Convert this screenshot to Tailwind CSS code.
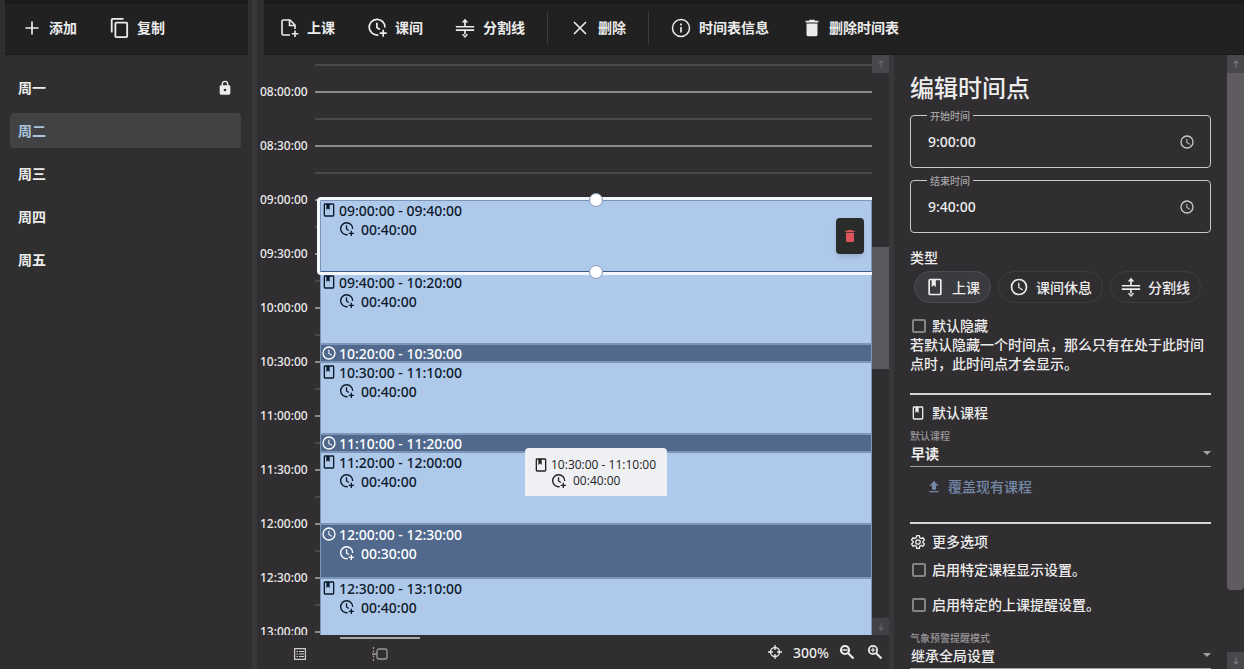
<!DOCTYPE html>
<html lang="zh-CN">
<head>
<meta charset="utf-8">
<meta name="viewport" content="width=device-width, initial-scale=1">
<title>时间表</title>
<script src="https://cdn.jsdelivr.net/npm/@tailwindcss/browser@4"></script>
</head>
<body class="bg-[#312e31] text-[#ececec] font-['Noto_Sans','Noto_Sans_CJK_SC',sans-serif] text-sm font-medium leading-[19px]">
<svg class="hidden" aria-hidden="true">
  <symbol id="book" viewBox="0 0 24 24"><path fill="currentColor" d="M18 2a2 2 0 0 1 2 2v16a2 2 0 0 1-2 2H6a2 2 0 0 1-2-2V4a2 2 0 0 1 2-2h12m0 2h-5v8l-2.500-2.250L8 12V4H6v16h12V4Z"/></symbol>
  <symbol id="clock" viewBox="0 0 24 24"><path fill="currentColor" d="M12 20a8 8 0 1 0 0-16 8 8 0 0 0 0 16m0-18a10 10 0 1 1 0 20 10 10 0 0 1 0-20m.5 5v5.250l4.500 2.670-.75 1.230L11 13V7h1.500Z"/></symbol>
  <symbol id="clock-plus" viewBox="0 0 24 24"><g fill="none" stroke="currentColor" stroke-width="2"><path d="M20.500 12A9 9 0 1 0 13 20.500M11.300 6.500v5.500l3.500 2.200M18.500 14.500v8M14.500 18.500h8"/></g></symbol>
  <symbol id="split" viewBox="0 0 24 24"><path fill="currentColor" d="M1 9.500h22v2H1zM1 13.500h22v2H1zM11 4h2v6h-2zM11 15h2v6h-2zM12 1l4 4.500H8zM12 24l4-4.500H8z"/></symbol>
  <symbol id="trash" viewBox="0 0 24 24"><path fill="currentColor" d="M19 4h-3.500l-1-1h-5l-1 1H5v2h14M6 19a2 2 0 0 0 2 2h8a2 2 0 0 0 2-2V7H6v12Z"/></symbol>
  <symbol id="up" viewBox="0 0 16 16"><path fill="none" stroke="currentColor" stroke-width="1.500" d="M8 13V4M5 7l3-3 3 3"/></symbol>
  <symbol id="caret" viewBox="0 0 8 4"><path fill="currentColor" d="M0 0h8L4 4z"/></symbol>
</svg>

<div class="flex h-screen overflow-hidden">
  <!-- Schedule list -->
  <aside class="flex w-[252px] shrink-0 flex-col bg-[#2f2f30]">
    <div class="mr-1 ml-[5px] flex h-[55px] items-center border-t-4 border-b border-t-[#1b1b1b] border-b-[#191919] bg-[#212121] pb-[3px] font-bold">
      <button class="flex items-center gap-2 px-4"><svg class="size-5" viewBox="0 0 20 20"><path d="M11 3.500v13M4.500 10h13" stroke="currentColor" stroke-width="1.700"/></svg>添加</button>
      <button class="flex items-center gap-2 px-4"><svg class="h-[22px] w-5" viewBox="0 0 22 24"><path fill="currentColor" d="M19 21H8V7h11m0-2H8a2 2 0 0 0-2 2v14a2 2 0 0 0 2 2h11a2 2 0 0 0 2-2V7a2 2 0 0 0-2-2m-3-4H4a2 2 0 0 0-2 2v14h2V3h12V1Z"/></svg>复制</button>
    </div>
    <nav class="mt-[15px] mr-[11px] ml-[10px] flex flex-col gap-2 font-bold">
      <a href="#" class="flex h-[35px] items-center justify-between rounded-sm px-2">周一<svg class="size-4" viewBox="0 0 24 24"><path fill="currentColor" d="M12 17a2 2 0 1 0 0-4 2 2 0 0 0 0 4m6-9a2 2 0 0 1 2 2v10a2 2 0 0 1-2 2H6a2 2 0 0 1-2-2V10a2 2 0 0 1 2-2h1V6a5 5 0 0 1 10 0v2h1m-6-5a3 3 0 0 0-3 3v2h6V6a3 3 0 0 0-3-3Z"/></svg></a>
      <a href="#" class="flex h-[35px] items-center rounded-sm bg-[#414244] px-2 text-[#a9c4dc]">周二</a>
      <a href="#" class="flex h-[35px] items-center rounded-sm px-2">周三</a>
      <a href="#" class="flex h-[35px] items-center rounded-sm px-2">周四</a>
      <a href="#" class="flex h-[35px] items-center rounded-sm px-2">周五</a>
    </nav>
  </aside>
  <div class="w-[5px] shrink-0 bg-[#39373a]"></div>

  <main class="flex min-w-0 flex-1 flex-col">
    <div class="ml-[7px] flex h-[55px] shrink-0 items-center border-t-4 border-b border-t-[#1b1b1b] border-b-[#191919] bg-[#212121] pb-[3px] font-bold">
      <button class="flex items-center gap-2 pr-4 pl-[15px]"><svg class="size-5" viewBox="0 0 20 20"><path d="M11 17H4.500A1.500 1.500 0 0 1 3 15.500v-12A1.500 1.500 0 0 1 4.500 2H11l5 5v4M10.500 2v5.500H16M16 12.500v6.500M12.800 15.800h6.500" fill="none" stroke="currentColor" stroke-width="1.600"/></svg>上课</button>
      <button class="flex items-center gap-2 px-4"><svg class="size-[21px] -mr-px"><use href="#clock-plus"/></svg>课间</button>
      <button class="flex items-center gap-2 px-4"><svg class="size-5"><use href="#split"/></svg>分割线</button>
      <span class="mx-[6px] h-8 w-px bg-[#3c3c3c]"></span>
      <button class="flex items-center gap-2 px-4"><svg class="size-5" viewBox="0 0 20 20"><path d="M4 4l12 12M16 4L4 16" stroke="currentColor" stroke-width="1.600"/></svg>删除</button>
      <span class="mx-[6px] h-8 w-px bg-[#3c3c3c]"></span>
      <button class="flex items-center gap-2 px-4"><svg class="size-5" viewBox="0 0 20 20"><circle cx="10" cy="10" r="8.500" fill="none" stroke="currentColor" stroke-width="1.500"/><path d="M10 9v5.500M10 5.500v2" stroke="currentColor" stroke-width="1.700"/></svg>时间表信息</button>
      <button class="flex items-center gap-2 px-4"><svg class="size-[22px] -mr-0.5"><use href="#trash"/></svg>删除时间表</button>
    </div>

    <div class="flex min-h-0 flex-1">
      <!-- Timeline -->
      <section class="flex min-w-0 flex-1 flex-col">
        <div class="flex min-h-0 flex-1 overflow-hidden">
          <div class="flex min-w-0 flex-1 overflow-hidden">
            <div class="w-[58px] shrink-0 pt-[10px] pl-[3px] text-xs">
              <div class="flex h-[54px] items-center">08:00:00</div>
              <div class="flex h-[54px] items-center">08:30:00</div>
              <div class="flex h-[54px] items-center">09:00:00</div>
              <div class="flex h-[54px] items-center">09:30:00</div>
              <div class="flex h-[54px] items-center">10:00:00</div>
              <div class="flex h-[54px] items-center">10:30:00</div>
              <div class="flex h-[54px] items-center">11:00:00</div>
              <div class="flex h-[54px] items-center">11:30:00</div>
              <div class="flex h-[54px] items-center">12:00:00</div>
              <div class="flex h-[54px] items-center">12:30:00</div>
              <div class="flex h-[54px] items-center">13:00:00</div>
            </div>
            <div class="grid min-w-0 flex-1 grid-cols-1">
              <div class="col-start-1 row-start-1 pt-[9px]">
                <div class="h-[27px] border-t-2 border-[#4b484b]"></div><div class="h-[27px] border-t-2 border-[#8d8a8d]"></div>
                <div class="h-[27px] border-t-2 border-[#4b484b]"></div><div class="h-[27px] border-t-2 border-[#8d8a8d]"></div>
                <div class="h-[27px] border-t-2 border-[#4b484b]"></div><div class="h-[27px] border-t-2 border-[#8d8a8d]"></div>
                <div class="h-[27px] border-t-2 border-[#4b484b]"></div><div class="h-[27px] border-t-2 border-[#8d8a8d]"></div>
                <div class="h-[27px] border-t-2 border-[#4b484b]"></div><div class="h-[27px] border-t-2 border-[#8d8a8d]"></div>
                <div class="h-[27px] border-t-2 border-[#4b484b]"></div><div class="h-[27px] border-t-2 border-[#8d8a8d]"></div>
                <div class="h-[27px] border-t-2 border-[#4b484b]"></div><div class="h-[27px] border-t-2 border-[#8d8a8d]"></div>
                <div class="h-[27px] border-t-2 border-[#4b484b]"></div><div class="h-[27px] border-t-2 border-[#8d8a8d]"></div>
                <div class="h-[27px] border-t-2 border-[#4b484b]"></div><div class="h-[27px] border-t-2 border-[#8d8a8d]"></div>
                <div class="h-[27px] border-t-2 border-[#4b484b]"></div><div class="h-[27px] border-t-2 border-[#8d8a8d]"></div>
                <div class="h-[27px] border-t-2 border-[#4b484b]"></div><div class="h-[27px] border-t-2 border-[#8d8a8d]"></div>
              </div>
              <div class="relative z-0 col-start-1 row-start-1 ml-[5px] pt-[145px] text-[#0d1a2c]">
                <div class="relative z-10 h-[72px] border border-[#7c95b8] border-b-[#3f588a] bg-[#afc9ea]">
                  <div class="flex h-[18px] items-center gap-[2px]"><svg class="size-4"><use href="#book"/></svg>09:00:00 - 09:40:00</div>
                  <div class="flex h-5 items-center gap-[6px] pl-[18px]"><svg class="size-4"><use href="#clock-plus"/></svg>00:40:00</div>
                  <div class="pointer-events-none absolute -top-1 right-[-1px] -bottom-1 -left-1 rounded-l-sm border-[3px] border-r-0 border-[#f4f7fc]"></div>
                  <span class="absolute top-[-8px] left-1/2 size-[14px] -translate-x-1/2 rounded-full border border-[#8499b8] bg-white"></span>
                  <span class="absolute bottom-[-8px] left-1/2 size-[14px] -translate-x-1/2 rounded-full border border-[#8499b8] bg-white"></span>
                  <button aria-label="删除" class="absolute top-[17px] right-[7px] flex h-9 w-7 items-center justify-center rounded bg-[#2a2c2b] text-[#e0555b] shadow-md"><svg class="size-4"><use href="#trash"/></svg></button>
                </div>
                <div class="h-[72px] border border-[#7c95b8] bg-[#afc9ea]">
                  <div class="flex h-[18px] items-center gap-[2px]"><svg class="size-4"><use href="#book"/></svg>09:40:00 - 10:20:00</div>
                  <div class="flex h-5 items-center gap-[6px] pl-[18px]"><svg class="size-4"><use href="#clock-plus"/></svg>00:40:00</div>
                </div>
                <div class="flex h-[18px] items-center gap-[2px] border border-[#7c95b8] bg-[#50698d] text-white"><svg class="size-4"><use href="#clock"/></svg>10:20:00 - 10:30:00</div>
                <div class="h-[72px] border border-[#7c95b8] bg-[#afc9ea]">
                  <div class="flex h-[18px] items-center gap-[2px]"><svg class="size-4"><use href="#book"/></svg>10:30:00 - 11:10:00</div>
                  <div class="flex h-5 items-center gap-[6px] pl-[18px]"><svg class="size-4"><use href="#clock-plus"/></svg>00:40:00</div>
                </div>
                <div class="flex h-[18px] items-center gap-[2px] border border-[#7c95b8] bg-[#50698d] text-white"><svg class="size-4"><use href="#clock"/></svg>11:10:00 - 11:20:00</div>
                <div class="relative h-[72px] border border-[#7c95b8] bg-[#afc9ea]">
                  <div class="flex h-[18px] items-center gap-[2px]"><svg class="size-4"><use href="#book"/></svg>11:20:00 - 12:00:00</div>
                  <div class="flex h-5 items-center gap-[6px] pl-[18px]"><svg class="size-4"><use href="#clock-plus"/></svg>00:40:00</div>
                  <div role="tooltip" class="absolute -top-[5px] left-[204px] h-12 w-[142px] rounded-t-sm bg-[#eff0f3] pt-[9px] pl-2 font-['Open_Sans','Noto_Sans',sans-serif] text-xs leading-4 font-normal text-[#222]">
                    <div class="flex items-center gap-[2px] whitespace-nowrap"><svg class="size-4"><use href="#book"/></svg>10:30:00 - 11:10:00</div>
                    <div class="flex items-center gap-[6px] pl-[18px]"><svg class="size-4"><use href="#clock-plus"/></svg>00:40:00</div>
                  </div>
                </div>
                <div class="h-[54px] border border-[#7c95b8] bg-[#50698d] text-white">
                  <div class="flex h-[18px] items-center gap-[2px]"><svg class="size-4"><use href="#clock"/></svg>12:00:00 - 12:30:00</div>
                  <div class="flex h-5 items-center gap-[6px] pl-[18px]"><svg class="size-4"><use href="#clock-plus"/></svg>00:30:00</div>
                </div>
                <div class="h-[72px] border border-[#7c95b8] bg-[#afc9ea]">
                  <div class="flex h-[18px] items-center gap-[2px]"><svg class="size-4"><use href="#book"/></svg>12:30:00 - 13:10:00</div>
                  <div class="flex h-5 items-center gap-[6px] pl-[18px]"><svg class="size-4"><use href="#clock-plus"/></svg>00:40:00</div>
                </div>
              </div>
            </div>
          </div>
          <div class="flex w-[17px] shrink-0 flex-col text-[#69666b]">
            <div class="flex h-[18px] items-center justify-center bg-[#4a474c]"><svg class="size-3"><use href="#up"/></svg></div>
            <div class="flex-[174]"></div><div class="flex-[122] bg-[#5b595e]"></div><div class="flex-[249]"></div>
            <div class="flex h-[17px] items-center justify-center bg-[#444146]"><svg class="size-3 rotate-180"><use href="#up"/></svg></div>
          </div>
        </div>
        <!-- View tabs and zoom -->
        <div class="flex h-[34px] shrink-0 items-stretch justify-between pt-[2px] pl-[3px]">
          <div class="flex text-[#cfcccf]">
            <button aria-label="列表视图" class="flex w-20 items-center justify-center border-t-2 border-transparent"><svg class="size-[14px]" viewBox="0 0 14 14"><path d="M1.600 1.600h10.800v10.800H1.600zM3.500 4.500H5M6 4.500h5M3.500 7H5M6 7h5M3.500 9.500H5M6 9.500h5" fill="none" stroke="currentColor" stroke-width="1.200"/></svg></button>
            <button aria-label="时间轴视图" class="flex w-20 items-center justify-center border-t-2 border-[#a8a6a8] text-[#9b999b]"><svg class="h-[14px] w-4" viewBox="0 0 16 14"><path d="M1.500 0v2M1.500 3.500v2M1.500 8.500v2M1.500 12v2M0 7h5" fill="none" stroke="currentColor" stroke-width="1.300"/><rect x="5" y="2" width="10" height="10" rx="2" fill="none" stroke="currentColor" stroke-width="1.300"/></svg></button>
          </div>
          <div class="flex items-center gap-[10px] pr-[6px] pb-[2px]">
            <button aria-label="定位"><svg class="block size-4" viewBox="0 0 16 16"><circle cx="8" cy="8" r="4.500" fill="none" stroke="currentColor" stroke-width="1.300"/><path d="M8 1v5M8 10v5M1 8h5M10 8h5" stroke="currentColor" stroke-width="1.300"/></svg></button>
            <span>300%</span>
            <button aria-label="缩小"><svg class="block size-4" viewBox="0 0 16 16"><circle cx="6" cy="6" r="4" fill="none" stroke="currentColor" stroke-width="2.200"/><path d="M9 9l5.500 5.500" stroke="currentColor" stroke-width="2.200"/><path d="M3.500 6h5" stroke="currentColor" stroke-width="1.500"/></svg></button>
            <button aria-label="放大" class="ml-[2px]"><svg class="block size-4" viewBox="0 0 16 16"><circle cx="6" cy="6" r="4.200" fill="none" stroke="currentColor" stroke-width="1.800"/><path d="M9 9l5.500 5.500" stroke="currentColor" stroke-width="2.200"/><path d="M3.500 6h5M6 3.500v5" stroke="currentColor" stroke-width="1.200"/></svg></button>
          </div>
        </div>
      </section>
      <div class="w-[5px] shrink-0 bg-[#39373a]"></div>

      <!-- Time point editor -->
      <section class="flex w-[350px] shrink-0">
        <form class="flex min-w-0 flex-1 flex-col overflow-hidden pt-[15px] pr-4 pl-4">
          <h1 class="text-2xl leading-9 font-medium">编辑时间点</h1>
          <div class="relative mt-[9px] flex h-[53px] shrink-0 items-center rounded border border-[#c9c7c9] pr-[15px] pl-[17px]">
            <label for="start" class="absolute -top-[7px] left-4 bg-[#312e31] px-[3px] text-[10px] leading-[14px] text-[#a3a1a3]">开始时间</label>
            <input id="start" value="9:00:00" class="min-w-0 flex-1 bg-transparent outline-none"><svg class="size-4 text-[#c9c7c9]"><use href="#clock"/></svg>
          </div>
          <div class="relative mt-3 flex h-[53px] shrink-0 items-center rounded border border-[#c9c7c9] pr-[15px] pl-[17px]">
            <label for="end" class="absolute -top-[7px] left-4 bg-[#312e31] px-[3px] text-[10px] leading-[14px] text-[#a3a1a3]">结束时间</label>
            <input id="end" value="9:40:00" class="min-w-0 flex-1 bg-transparent outline-none"><svg class="size-4 text-[#c9c7c9]"><use href="#clock"/></svg>
          </div>
          <div class="mt-[15px]">类型</div>
          <div class="mt-1 ml-1 flex gap-[7px]">
            <label class="relative flex h-8 items-center gap-[7px] rounded-full border border-[#4a4d50] bg-[#3a3b3e] px-[10px]"><input type="radio" name="kind" checked class="absolute size-0 appearance-none"><svg class="size-5"><use href="#book"/></svg>上课</label>
            <label class="relative flex h-8 items-center gap-[7px] rounded-full border border-[#3f3d40] px-[10px]"><input type="radio" name="kind" class="absolute size-0 appearance-none"><svg class="size-5"><use href="#clock"/></svg>课间休息</label>
            <label class="relative flex h-8 items-center gap-[7px] rounded-full border border-[#3f3d40] px-[10px]"><input type="radio" name="kind" class="absolute size-0 appearance-none"><svg class="size-5"><use href="#split"/></svg>分割线</label>
          </div>
          <label class="mt-[13px] ml-[2px] flex items-center gap-[6px]"><input type="checkbox" class="size-[14px] appearance-none rounded-[2px] border-2 border-[#858385]">默认隐藏</label>
          <p class="mr-[-4px]">若默认隐藏一个时间点，那么只有在处于此时间点时，此时间点才会显示。</p>
          <hr class="mt-5 border-t-2 border-[#d6d4d6]">
          <h2 class="mt-2 flex items-center gap-[6px]"><svg class="size-4"><use href="#book"/></svg>默认课程</h2>
          <label for="course" class="mt-[7px] text-[10px] leading-[14px] text-[#979597]">默认课程</label>
          <div class="relative h-[24px] shrink-0 border-b border-[#a3a1a3]">
            <select id="course" class="block h-5 w-full appearance-none bg-transparent pl-px font-bold outline-none"><option>早读</option></select>
            <svg class="pointer-events-none absolute top-2 right-0 h-1 w-2 text-[#a3a1a3]"><use href="#caret"/></svg>
          </div>
          <button type="button" class="mt-[10px] flex items-center gap-[6px] self-start pl-4 text-[#7388a6]"><svg class="size-4" viewBox="0 0 24 24"><path fill="currentColor" d="M9 16v-6H5l7-7 7 7h-4v6H9m-4 4v-2h14v2H5Z"/></svg>覆盖现有课程</button>
          <hr class="mt-[26px] border-t-2 border-[#d6d4d6]">
          <h2 class="mt-2 flex items-center gap-[6px]"><svg class="size-4" viewBox="0 0 24 24" fill="none" stroke="currentColor" stroke-width="2" stroke-linejoin="round"><circle cx="12" cy="12" r="3.300"/><path d="M9.500 5.500 10 2.500h4l.5 3 2.200 1.300 3-1.200 2 3.500-2.500 2v1.800l2.500 2-2 3.500-3-1.200-2.200 1.300-.5 3h-4l-.5-3-2.200-1.300-3 1.200-2-3.500 2.500-2v-1.800l-2.500-2 2-3.500 3 1.200z"/></svg>更多选项</h2>
          <label class="mt-[9px] ml-[2px] flex items-center gap-[6px]"><input type="checkbox" class="size-[14px] appearance-none rounded-[2px] border-2 border-[#858385]">启用特定课程显示设置。</label>
          <label class="mt-4 ml-[2px] flex items-center gap-[6px]"><input type="checkbox" class="size-[14px] appearance-none rounded-[2px] border-2 border-[#858385]">启用特定的上课提醒设置。</label>
          <label for="weather" class="mt-[17px] text-[10px] leading-[14px] text-[#979597]">气象预警提醒模式</label>
          <div class="relative h-[24px] shrink-0 border-b border-[#a3a1a3]">
            <select id="weather" class="block h-5 w-full appearance-none bg-transparent pl-px outline-none"><option>继承全局设置</option></select>
            <svg class="pointer-events-none absolute top-2 right-0 h-1 w-2 text-[#a3a1a3]"><use href="#caret"/></svg>
          </div>
        </form>
        <div class="flex w-[17px] shrink-0 flex-col text-[#7a777c]">
          <div class="flex h-[18px] shrink-0 items-center justify-center bg-[#4a474c]"><svg class="size-3"><use href="#up"/></svg></div>
          <div class="flex-[517] rounded-b-sm bg-[#5f5b60]"></div><div class="flex-[62]"></div>
          <div class="flex h-[17px] shrink-0 items-center justify-center bg-[#4a474c]"><svg class="size-3 rotate-180"><use href="#up"/></svg></div>
        </div>
      </section>
    </div>
  </main>
</div>
</body>
</html>
